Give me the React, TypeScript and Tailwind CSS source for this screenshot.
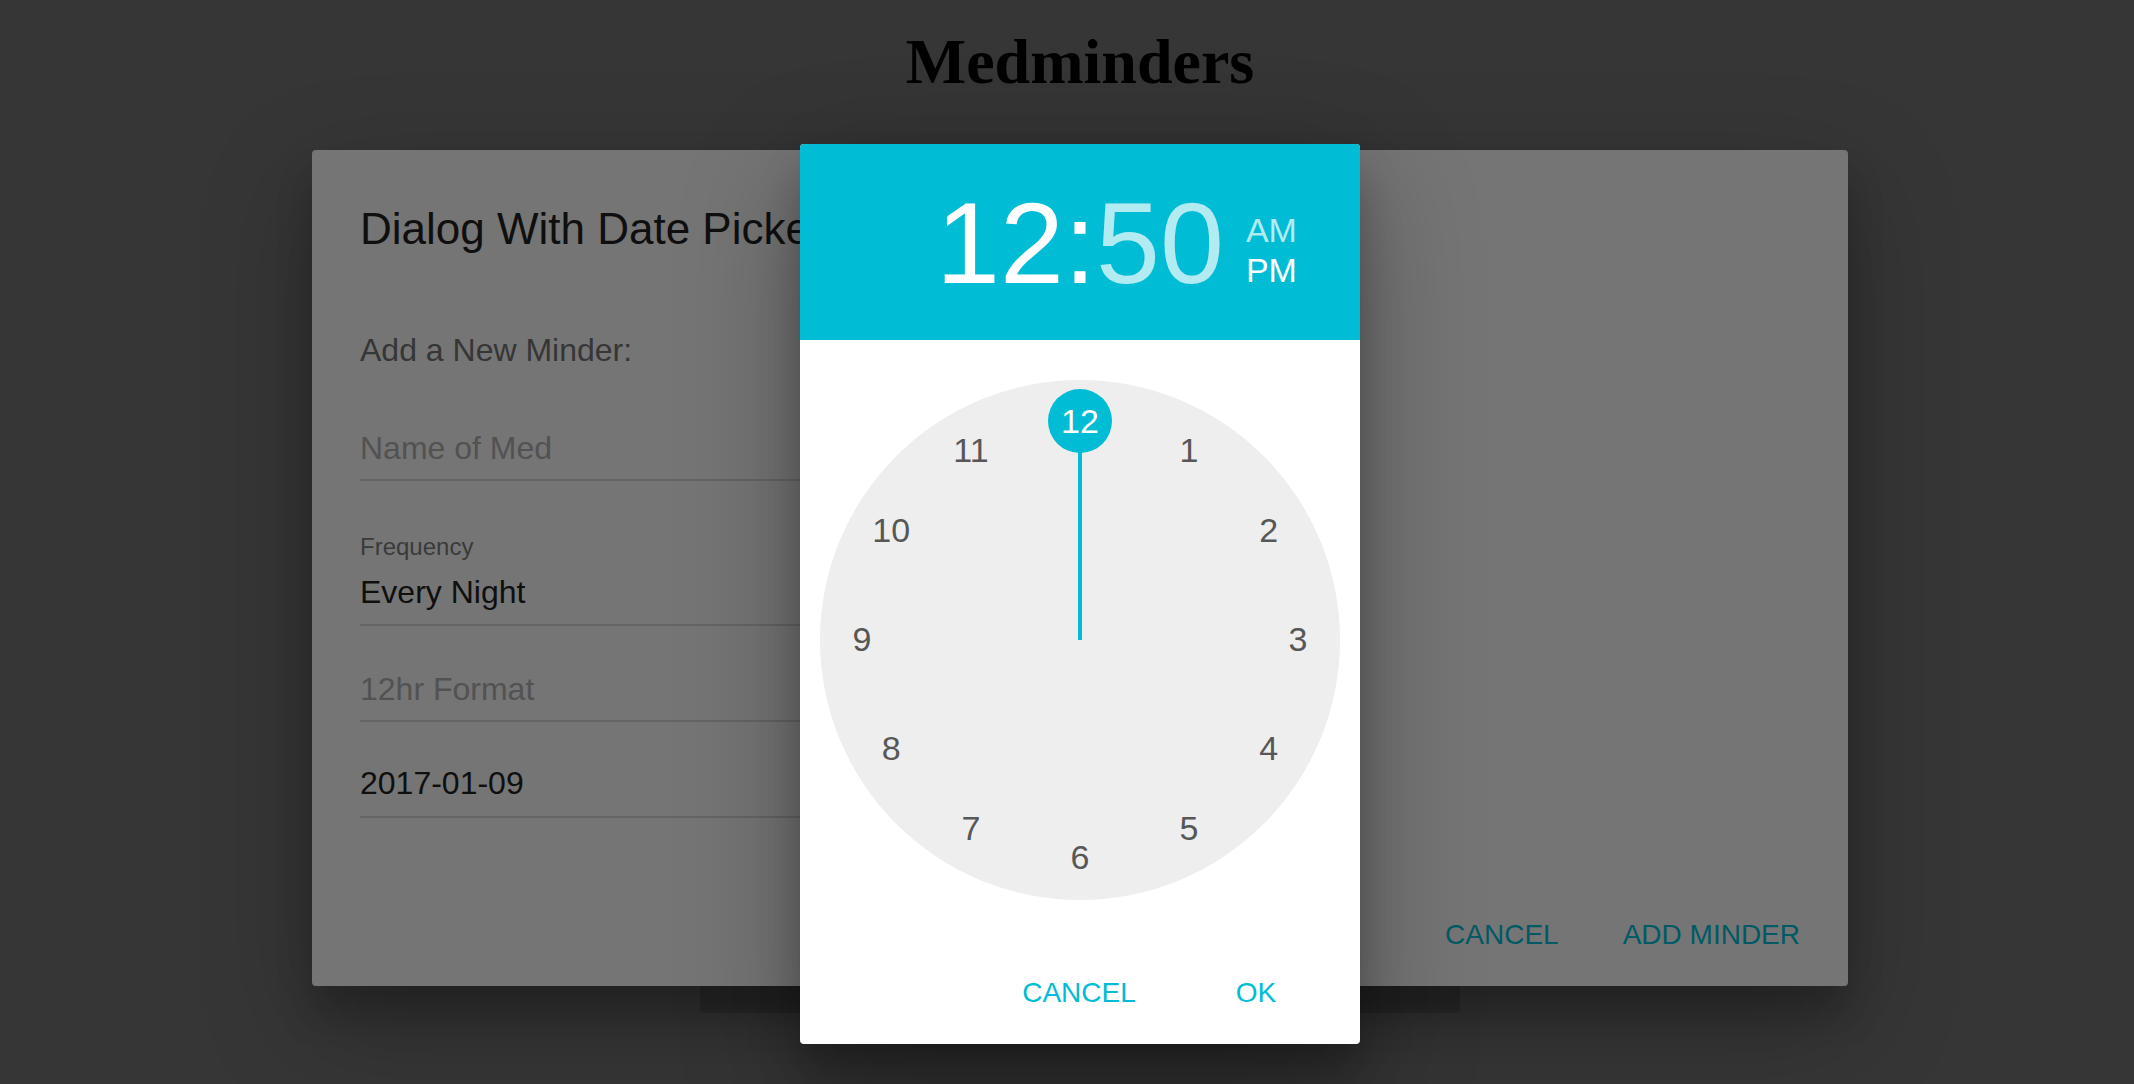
import React from "react";

const hours = [12, 1, 2, 3, 4, 5, 6, 7, 8, 9, 10, 11];
const faceSize = 520;
const numberRadius = 218;

function ClockFace() {
  const center = faceSize / 2;

  return (
    <div className="relative h-[520px] w-[520px] rounded-full bg-[#eeeeee]">
      {/* hand */}
      <div className="absolute left-[258px] top-[70px] h-[190px] w-[4px] bg-[#00bcd4]" />
      <div className="absolute left-[228px] top-[9px] h-[64px] w-[64px] rounded-full bg-[#00bcd4]" />
      {hours.map((hour, i) => {
        const angle = (i * Math.PI) / 6;
        const x = center + numberRadius * Math.sin(angle);
        const y = center - numberRadius * Math.cos(angle);
        return (
          <span
            key={hour}
            className={
              hour === 12
                ? "absolute w-[64px] text-center text-[34px] leading-[34px] text-white"
                : "absolute w-[64px] text-center text-[34px] leading-[34px] text-[#575757]"
            }
            style={{ left: x - 32, top: y - 18 }}
          >
            {hour}
          </span>
        );
      })}
    </div>
  );
}

function TimePicker() {
  return (
    <div className="flex h-[900px] w-[560px] flex-col overflow-hidden rounded-[4px] bg-white shadow-[0_38px_120px_rgba(0,0,0,0.3),0_30px_40px_rgba(0,0,0,0.22)]">
      <div className="grid h-[196px] grid-cols-[1fr_auto_1fr] bg-[#00bcd4] pt-[41px]">
        <div />
        <div className="text-[115px] leading-[116px]">
          <span className="text-white">12:</span>
          <span className="text-[#b3ebf2]">50</span>
        </div>
        <div className="pl-[22px] pt-[25px] text-[34px] leading-[40px]">
          <div className="text-[#b3ebf2]">AM</div>
          <div className="text-white">PM</div>
        </div>
      </div>

      <div className="flex justify-center pt-[40px]">
        <ClockFace />
      </div>

      <div className="mt-[57px] flex justify-end px-[16px]">
        <button
          type="button"
          className="h-[72px] w-[178px] text-[28px] leading-[72px] text-[#00bcd4]"
        >
          CANCEL
        </button>
        <button
          type="button"
          className="h-[72px] w-[176px] text-[28px] leading-[72px] text-[#00bcd4]"
        >
          OK
        </button>
      </div>
    </div>
  );
}

function MinderDialog() {
  return (
    <div className="relative mx-auto w-[1536px]">
      {/* dimmed date picker sheet peeking from behind */}
      <div className="absolute left-[388px] top-[80px] bottom-[-27px] w-[760px] rounded-[4px] bg-[#2d2d2d]" />

      <div className="relative flex h-[836px] flex-col rounded-[4px] bg-[#757575] px-[48px] pt-[47px] shadow-[0_38px_110px_rgba(0,0,0,0.26),0_28px_36px_rgba(0,0,0,0.2)]">
        <h2 className="text-[44px] leading-[64px] text-[#0f0f0f]">
          Dialog With Date Picker
        </h2>

        <p className="mt-[69px] text-[32px] leading-[40px] text-[#363636]">
          Add a New Minder:
        </p>

        <div className="w-[512px]">
          <div className="mt-[58px] border-b-2 border-[#656565] pb-[11px] text-[32px] leading-[40px] text-[#525252]">
            Name of Med
          </div>

          <div className="mt-[54px] text-[24px] leading-[24px] text-[#3a3a3a]">
            Frequency
          </div>
          <div className="mt-[13px] border-b-2 border-[#656565] pb-[12px] text-[32px] leading-[40px] text-[#0f0f0f]">
            Every Night
          </div>

          <div className="mt-[43px] border-b-2 border-[#656565] pb-[11px] text-[32px] leading-[40px] text-[#525252]">
            12hr Format
          </div>

          <div className="mt-[41px] border-b-2 border-[#656565] pb-[13px] text-[32px] leading-[40px] text-[#0f0f0f]">
            2017-01-09
          </div>
        </div>

        <div className="-mx-[32px] mt-auto flex justify-end pb-[15px]">
          <button
            type="button"
            className="h-[72px] px-[32px] text-[28px] leading-[72px] text-[#005a65]"
          >
            CANCEL
          </button>
          <button
            type="button"
            className="h-[72px] px-[32px] text-[28px] leading-[72px] text-[#005a65]"
          >
            ADD MINDER
          </button>
        </div>
      </div>
    </div>
  );
}

export default function App() {
  return (
    <div className="relative h-[1084px] overflow-hidden bg-[#363636] pl-[26px] font-['Liberation_Sans',Arial,sans-serif]">
      <h1 className="pt-[30px] text-center font-['Liberation_Serif','Times_New_Roman',serif] text-[64px] font-bold leading-[64px] text-black">
        Medminders
      </h1>

      <div className="mt-[56px]">
        <MinderDialog />
      </div>

      {/* time picker modal */}
      <div className="absolute inset-0 flex justify-center pl-[26px] pt-[144px]">
        <TimePicker />
      </div>
    </div>
  );
}
